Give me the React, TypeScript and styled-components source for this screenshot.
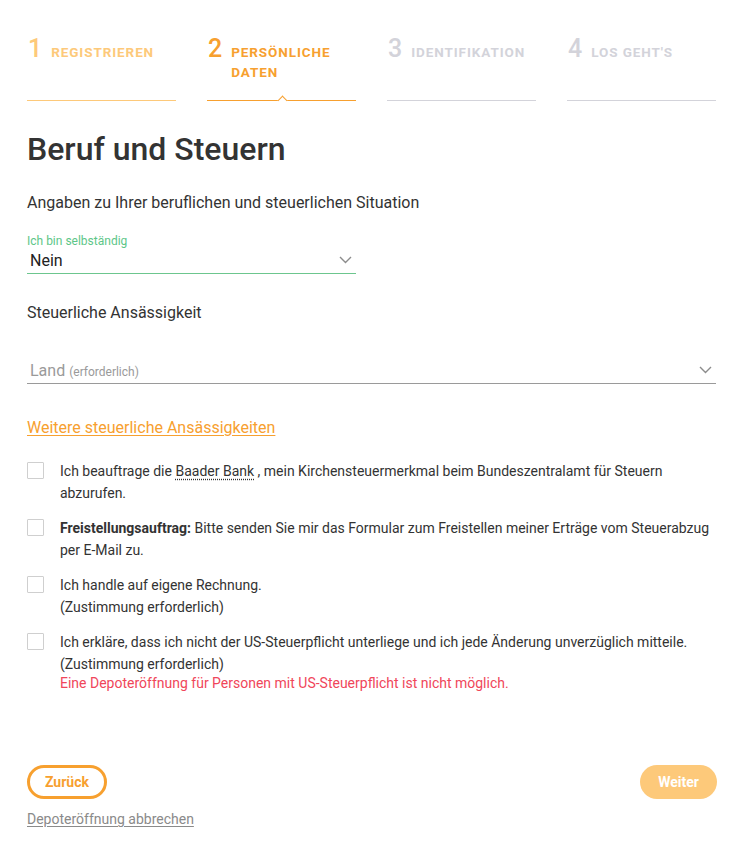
import React from 'react'
import styled, { createGlobalStyle } from 'styled-components'

const orange = '#f7a02f'
const lightOrange = '#fdc97a'
const grey = '#d3d3da'
const text = '#333333'

const GlobalStyle = createGlobalStyle`
  body {
    margin: 0;
    background: #fff;
    font-family: Roboto, 'Liberation Sans', sans-serif;
    color: ${text};
  }
`

const Page = styled.div`
  padding: 34px 40px 0 27px;
`

const Stepper = styled.div`
  display: grid;
  grid-template-columns: repeat(4, 149px);
  column-gap: 31px;
`

type StepState = 'done' | 'active' | 'todo'

const stepColor = (s: StepState) =>
  s === 'done' ? lightOrange : s === 'active' ? orange : grey

const Step = styled.div<{ $state: StepState }>`
  position: relative;
  display: flex;
  align-items: flex-start;
  gap: 9px;
  height: 66px;
  padding-left: 1px;
  border-bottom: 1px solid ${(p) => stepColor(p.$state)};
  color: ${(p) => stepColor(p.$state)};
  ${(p) =>
    p.$state === 'active' &&
    `
    &::after {
      content: '';
      position: absolute;
      left: 72px;
      bottom: -4px;
      width: 6px;
      height: 6px;
      background: #fff;
      border-left: 1px solid ${orange};
      border-top: 1px solid ${orange};
      transform: rotate(45deg);
    }
  `}
`

const StepNum = styled.span`
  font-size: 25px;
  font-weight: 500;
  line-height: 29px;
`

const StepLabel = styled.span`
  font-size: 13.5px;
  font-weight: 700;
  letter-spacing: 0.9px;
  text-transform: uppercase;
  line-height: 20px;
  padding-top: 8px;
`

const Title = styled.h1`
  margin: 28px 0 0;
  font-size: 32px;
  font-weight: 500;
  line-height: 40px;
  color: ${text};
`

const Lead = styled.p`
  margin: 24px 0 0;
  font-size: 16px;
  line-height: 20px;
`

const Field = styled.div<{ $width?: string; $tone: 'ok' | 'plain' }>`
  display: flex;
  flex-direction: column;
  width: ${(p) => p.$width || '100%'};
  border-bottom: 1px solid ${(p) => (p.$tone === 'ok' ? '#6cc68e' : '#9a9a9a')};
`

const FieldLabel = styled.span`
  font-size: 12px;
  line-height: 14px;
  color: #5dc688;
`

const FieldRow = styled.div`
  display: flex;
  align-items: center;
  justify-content: space-between;
  height: 24px;
  padding: 0 4px 1px 3px;
`

const FieldValue = styled.span<{ $placeholder?: boolean }>`
  font-size: 16px;
  color: ${(p) => (p.$placeholder ? '#9a9a9a' : '#222')};
`

const Hint = styled.span`
  font-size: 12px;
  color: #9a9a9a;
`

const SelfField = styled.div`
  margin-top: 21px;
`

const SectionTitle = styled.p`
  margin: 29px 0 0;
  font-size: 16px;
  line-height: 20px;
`

const CountryField = styled.div`
  margin-top: 35px;
`

const MoreLink = styled.a`
  display: inline-block;
  margin-top: 34px;
  font-size: 16px;
  line-height: 20px;
  color: ${orange};
  text-decoration: underline;
  text-underline-offset: 2px;
  cursor: pointer;
`

const Checks = styled.div`
  display: flex;
  flex-direction: column;
  gap: 13px;
  margin-top: 22px;
`

const CheckRow = styled.label`
  display: flex;
  align-items: flex-start;
  gap: 16px;
  font-size: 14px;
  line-height: 22px;
  color: ${text};
`

const Box = styled.span`
  flex: none;
  width: 15px;
  height: 15px;
  margin-top: 2px;
  border: 1px solid #cfcfcf;
  border-radius: 1px;
`

const CheckText = styled.div`
  flex: 1;
`

const Abbr = styled.span`
  text-decoration: underline dotted;
  text-underline-offset: 3px;
`

const Warning = styled.div`
  color: #f0465a;
  margin-top: -3px;
`

const Actions = styled.div`
  display: flex;
  justify-content: space-between;
  align-items: center;
  margin-top: 71px;
  margin-right: -1px;
`

const Button = styled.button<{ $variant: 'outline' | 'solid' }>`
  height: 34px;
  padding: 0 ${(p) => (p.$variant === 'outline' ? '15px' : '18px')};
  border-radius: 17px;
  font-family: inherit;
  font-size: 14px;
  font-weight: 700;
  cursor: pointer;
  border: ${(p) => (p.$variant === 'outline' ? `3px solid ${orange}` : 'none')};
  background: ${(p) => (p.$variant === 'outline' ? '#fff' : lightOrange)};
  color: ${(p) => (p.$variant === 'outline' ? orange : '#fff')};
`

const Cancel = styled.a`
  display: inline-block;
  margin-top: 12px;
  font-size: 14px;
  color: #8a8a8a;
  text-decoration: underline;
  text-underline-offset: 2px;
`

const Chevron = () => (
  <svg width="13" height="8" viewBox="0 0 13 8" fill="none">
    <path d="M1 1l5.5 5.5L12 1" stroke="#8c8c8c" strokeWidth="1.4" />
  </svg>
)

const steps: { n: number; label: string; state: StepState }[] = [
  { n: 1, label: 'Registrieren', state: 'done' },
  { n: 2, label: 'Persönliche Daten', state: 'active' },
  { n: 3, label: 'Identifikation', state: 'todo' },
  { n: 4, label: "Los geht's", state: 'todo' },
]

const App = () => {
  return (
    <Page>
      <GlobalStyle />
      <Stepper>
        {steps.map((s) => (
          <Step key={s.n} $state={s.state}>
            <StepNum>{s.n}</StepNum>
            <StepLabel>{s.label}</StepLabel>
          </Step>
        ))}
      </Stepper>

      <Title>Beruf und Steuern</Title>
      <Lead>Angaben zu Ihrer beruflichen und steuerlichen Situation</Lead>

      <SelfField>
        <Field $width="329px" $tone="ok">
          <FieldLabel>Ich bin selbständig</FieldLabel>
          <FieldRow>
            <FieldValue>Nein</FieldValue>
            <Chevron />
          </FieldRow>
        </Field>
      </SelfField>

      <SectionTitle>Steuerliche Ansässigkeit</SectionTitle>

      <CountryField>
        <Field $tone="plain">
          <FieldRow>
            <FieldValue $placeholder>
              Land <Hint>(erforderlich)</Hint>
            </FieldValue>
            <Chevron />
          </FieldRow>
        </Field>
      </CountryField>

      <MoreLink>Weitere steuerliche Ansässigkeiten</MoreLink>

      <Checks>
        <CheckRow>
          <Box />
          <CheckText>
            Ich beauftrage die <Abbr>Baader Bank</Abbr> , mein Kirchensteuermerkmal beim
            Bundeszentralamt für Steuern abzurufen.
          </CheckText>
        </CheckRow>
        <CheckRow>
          <Box />
          <CheckText>
            <b>Freistellungsauftrag:</b> Bitte senden Sie mir das Formular zum Freistellen meiner
            Erträge vom Steuerabzug per E-Mail zu.
          </CheckText>
        </CheckRow>
        <CheckRow>
          <Box />
          <CheckText>
            Ich handle auf eigene Rechnung.
            <br />
            (Zustimmung erforderlich)
          </CheckText>
        </CheckRow>
        <CheckRow>
          <Box />
          <CheckText>
            Ich erkläre, dass ich nicht der US-Steuerpflicht unterliege und ich jede Änderung
            unverzüglich mitteile.
            <br />
            (Zustimmung erforderlich)
            <Warning>Eine Depoteröffnung für Personen mit US-Steuerpflicht ist nicht möglich.</Warning>
          </CheckText>
        </CheckRow>
      </Checks>

      <Actions>
        <Button $variant="outline">Zurück</Button>
        <Button $variant="solid">Weiter</Button>
      </Actions>
      <Cancel>Depoteröffnung abbrechen</Cancel>
    </Page>
  )
}

export default App
